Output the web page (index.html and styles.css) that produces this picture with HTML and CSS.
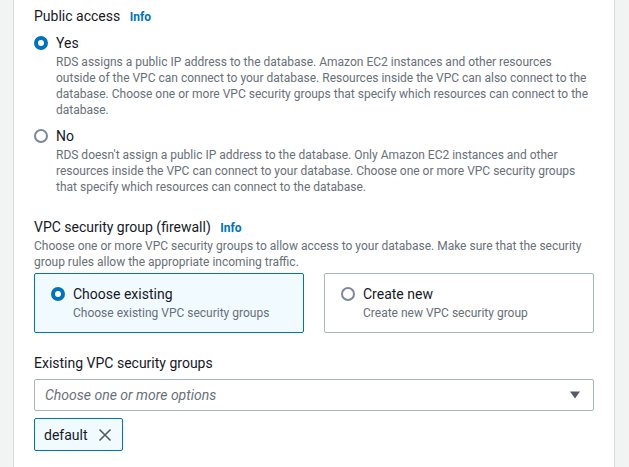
FILE: index.html
```html
<!DOCTYPE html>
<html>
<head>
<meta charset="utf-8">
<link rel="stylesheet" href="styles.css">
</head>
<body>
<div class="page">
  <div class="panel">
    <div class="field">
      <div class="label">Public access <a class="info">Info</a></div>
      <div class="radio-list">
        <div class="radio-item">
          <span class="radio checked"></span>
          <div class="radio-body">
            <div class="radio-label">Yes</div>
            <div class="radio-desc">RDS assigns a public IP address to the database. Amazon EC2 instances and other resources outside of the VPC can connect to your database. Resources inside the VPC can also connect to the database. Choose one or more VPC security groups that specify which resources can connect to the database.</div>
          </div>
        </div>
        <div class="radio-item">
          <span class="radio"></span>
          <div class="radio-body">
            <div class="radio-label">No</div>
            <div class="radio-desc">RDS doesn't assign a public IP address to the database. Only Amazon EC2 instances and other resources inside the VPC can connect to your database. Choose one or more VPC security groups that specify which resources can connect to the database.</div>
          </div>
        </div>
      </div>
    </div>

    <div class="field sg">
      <div class="label">VPC security group (firewall) <a class="info">Info</a></div>
      <div class="field-desc">Choose one or more VPC security groups to allow access to your database. Make sure that the security group rules allow the appropriate incoming traffic.</div>
      <div class="tiles">
        <div class="tile selected">
          <span class="radio checked"></span>
          <div class="radio-body">
            <div class="radio-label">Choose existing</div>
            <div class="tile-desc">Choose existing VPC security groups</div>
          </div>
        </div>
        <div class="tile">
          <span class="radio"></span>
          <div class="radio-body">
            <div class="radio-label">Create new</div>
            <div class="tile-desc">Create new VPC security group</div>
          </div>
        </div>
      </div>
    </div>

    <div class="field existing">
      <div class="label">Existing VPC security groups</div>
      <div class="select">
        <span class="placeholder">Choose one or more options</span>
        <svg class="caret" width="12" height="8" viewBox="0 0 12 8"><path d="M1 0.5 H11 L6 7.5 Z" fill="#545b64"/></svg>
      </div>
      <div class="tokens">
        <div class="token">
          <span>default</span>
          <svg class="x" width="14" height="14" viewBox="0 0 14 14"><path d="M1.5 1.5 L12.5 12.5 M12.5 1.5 L1.5 12.5" stroke="#545b64" stroke-width="1.6" fill="none"/></svg>
        </div>
      </div>
    </div>
  </div>
</div>
</body>
</html>
```

FILE: styles.css
```css
* { box-sizing: border-box; }
html, body { margin: 0; padding: 0; }
body {
  background: #f2f3f3;
  font-family: "Roboto", "Liberation Sans", sans-serif;
  color: #16191f;
  height: 467px;
  overflow: hidden;
}
.page {
  padding-left: 13px;
  width: 615px;
  height: 467px;
}
.panel {
  background: #fff;
  border-left: 1px solid #d5dbdb;
  border-right: 1px solid #d5dbdb;
  height: 100%;
  padding: 6px 20px 0 20px;
}
.label {
  font-size: 14px;
  line-height: 20px;
  color: #16191f;
}
.info {
  color: #0073bb;
  font-weight: 700;
  font-size: 12px;
  margin-left: 6px;
}
.radio-list {
  margin-top: 6px;
  display: flex;
  flex-direction: column;
  gap: 8px;
}
.radio-item {
  display: flex;
  gap: 8px;
}
.radio {
  flex: none;
  width: 14px;
  height: 14px;
  border-radius: 50%;
  border: 2px solid #7d8998;
  background: #fff;
  margin-top: 3px;
}
.radio.checked {
  border: 4px solid #0073bb;
}
.radio-body { flex: 1; }
.radio-label {
  font-size: 14px;
  line-height: 20px;
}
.radio-desc, .field-desc, .tile-desc {
  font-size: 12px;
  line-height: 16px;
  color: #687078;
}
.radio-desc { margin-top: 1px; }
.sg { margin-top: 22px; }
.field-desc { margin-top: 0; }
.tiles {
  margin-top: 3px;
  display: grid;
  grid-template-columns: 1fr 1fr;
  gap: 20px;
}
.tile {
  display: flex;
  gap: 8px;
  border: 1px solid #aab7b8;
  border-radius: 2px;
  padding: 10px 20px 12px 16px;
  height: 60px;
}
.tile.selected {
  background: #f1faff;
  border-color: #0073bb;
}
.tile-desc { margin-top: 1px; }
.existing { margin-top: 20px; }
.select {
  margin-top: 6px;
  height: 32px;
  border: 1px solid #aab7b8;
  border-radius: 2px;
  display: flex;
  align-items: center;
  justify-content: space-between;
  padding: 0 12px 0 10px;
}
.placeholder {
  font-style: italic;
  color: #687078;
  font-size: 14px;
}
.tokens { margin-top: 7px; display: flex; }
.token {
  display: flex;
  align-items: center;
  gap: 10px;
  height: 33px;
  padding: 0 10px 0 9px;
  background: #f1faff;
  border: 1px solid #0073bb;
  border-radius: 2px;
  font-size: 14px;
}
```
